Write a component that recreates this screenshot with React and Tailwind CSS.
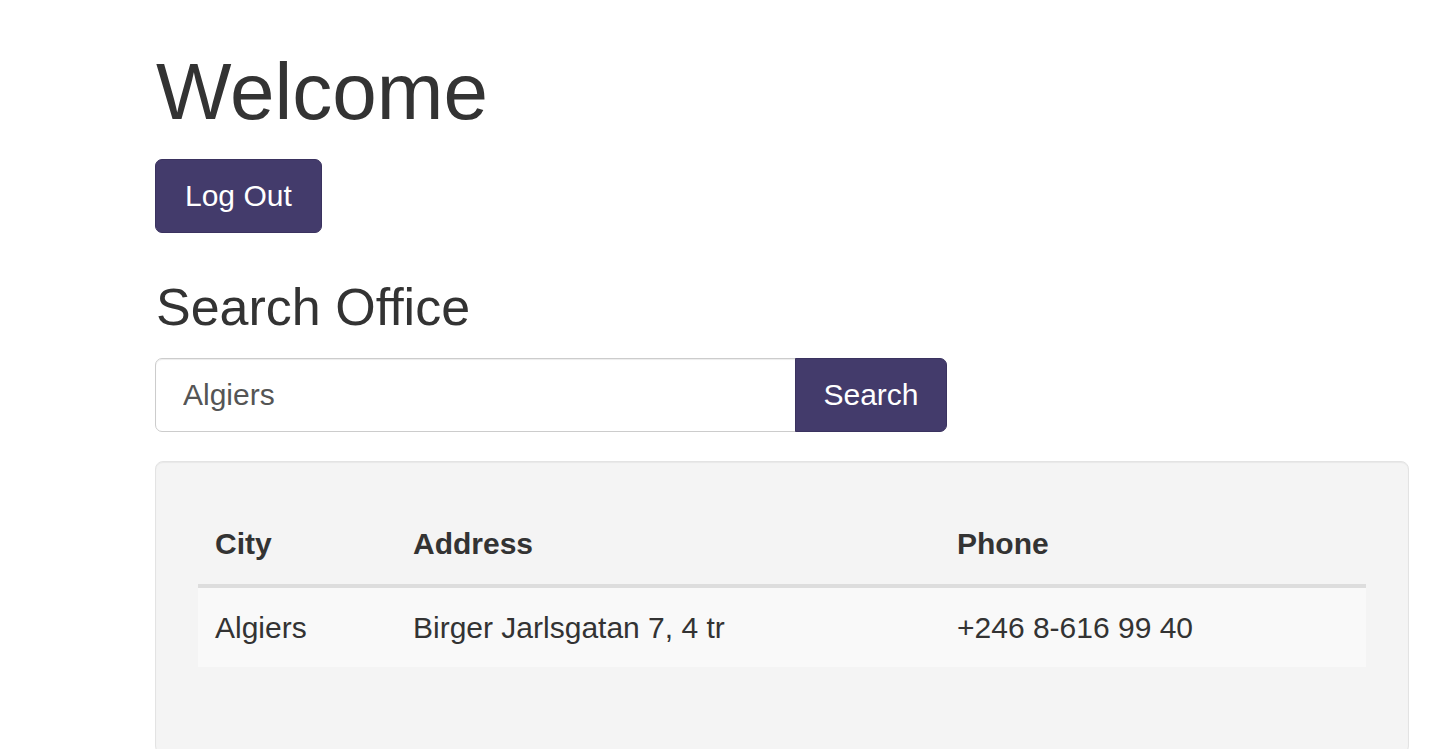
import React from "react";

const offices = [
  { city: "Algiers", address: "Birger Jarlsgatan 7, 4 tr", phone: "+246 8-616 99 40" },
];

export default function App() {
  return (
    <div
      className="min-h-screen bg-white text-[#333] pl-[155px] pr-[40px] pt-[48px]"
      style={{ fontFamily: '"Liberation Sans", Arial, sans-serif' }}
    >
      <h1 className="pl-[1px] text-[80px] leading-[88px] font-normal">Welcome</h1>

      <button className="mt-[23px] h-[74px] px-[29px] pb-[2px] flex items-center bg-[#433b6b] border border-[#3a325f] rounded-[7px] text-white text-[30px]">
        Log Out
      </button>

      <h2 className="mt-[46px] pl-[1px] text-[52px] leading-[57px] font-normal">Search Office</h2>

      {/* search form */}
      <form className="mt-[22px] flex w-[792px]" onSubmit={(e) => e.preventDefault()}>
        <input
          type="text"
          defaultValue="Algiers"
          className="h-[74px] flex-1 min-w-0 pl-[27px] border border-[#ccc] rounded-l-[7px] text-[30px] text-[#555] bg-white outline-none shadow-[inset_0_1px_1px_rgba(0,0,0,0.075)]"
        />
        <button
          type="submit"
          className="h-[74px] w-[152px] -ml-px pb-[2px] flex items-center justify-center bg-[#433b6b] border border-[#3a325f] rounded-r-[7px] text-white text-[30px]"
        >
          Search
        </button>
      </form>

      {/* results well */}
      <div className="mt-[29px] bg-[#f4f4f4] border border-[#e3e3e3] rounded-[8px] px-[42px] pt-[42px] pb-[86px] shadow-[inset_0_1px_1px_rgba(0,0,0,0.05)]">
        <table className="w-full border-separate border-spacing-0 text-[30px]">
          <thead>
            <tr>
              <th className="w-[198px] h-[84px] px-[17px] pb-[18px] align-bottom text-left font-bold border-b-4 border-[#ddd]">
                City
              </th>
              <th className="w-[544px] h-[84px] px-[17px] pb-[18px] align-bottom text-left font-bold border-b-4 border-[#ddd]">
                Address
              </th>
              <th className="h-[84px] px-[17px] pb-[18px] align-bottom text-left font-bold border-b-4 border-[#ddd]">
                Phone
              </th>
            </tr>
          </thead>
          <tbody>
            {offices.map((o) => (
              <tr key={o.city} className="bg-[#f9f9f9]">
                <td className="h-[79px] px-[17px] align-middle">{o.city}</td>
                <td className="h-[79px] px-[17px] align-middle">{o.address}</td>
                <td className="h-[79px] px-[17px] align-middle">{o.phone}</td>
              </tr>
            ))}
          </tbody>
        </table>
      </div>
    </div>
  );
}
